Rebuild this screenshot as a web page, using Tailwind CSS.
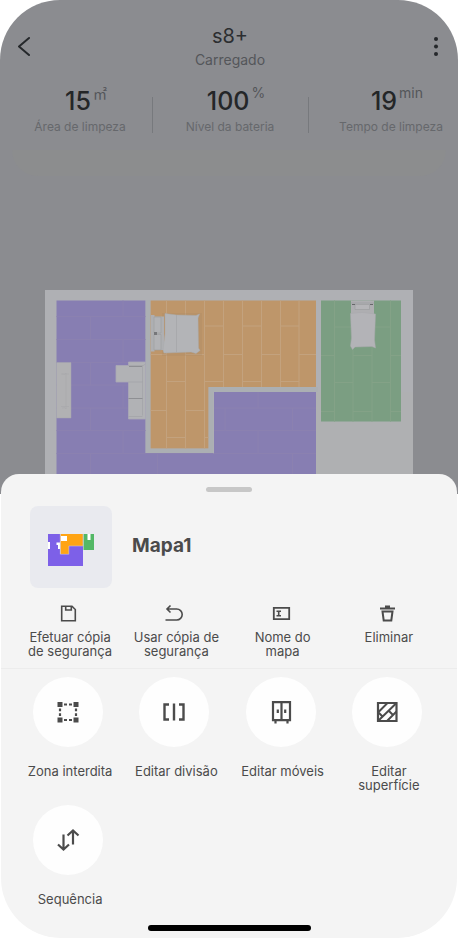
<!DOCTYPE html>
<html lang="pt">
<head>
  <meta charset="UTF-8">
  <meta name="viewport" content="width=device-width, initial-scale=1">
  <title>Mapa1</title>
  <script src="https://cdn.jsdelivr.net/npm/@tailwindcss/browser@4"></script>
</head>
<body class="bg-white font-['Inter',sans-serif]">

  <div class="min-h-screen flex flex-col rounded-[60px] overflow-hidden">

    <!-- Dimmed robot screen -->
    <div class="bg-[#8b8c90]">
      <header class="flex items-start justify-between pl-[18px] pr-4 pt-6">
        <button aria-label="Voltar" class="mt-3 w-5">
          <svg class="block" width="16" height="22" viewBox="0 0 16 22" fill="none" stroke="#25282b" stroke-width="2" stroke-linecap="round" stroke-linejoin="round"><path d="M11 2 1 10.500l10 8.500"/></svg>
        </button>
        <div class="text-center">
          <h1 class="text-xl leading-6 text-[#2c2e31]">s8+</h1>
          <p class="text-sm leading-6 text-[#54565a]">Carregado</p>
        </div>
        <button aria-label="Mais opções" class="mt-3 w-5">
          <svg class="block ml-auto" width="16" height="22" viewBox="0 0 16 22" fill="#25282b"><circle cx="10" cy="3" r="2"/><circle cx="10" cy="10.500" r="2"/><circle cx="10" cy="18" r="2"/></svg>
        </button>
      </header>

      <!-- Stats -->
      <section class="grid grid-cols-[152fr_156fr_150fr] mt-[13px] text-center whitespace-nowrap">
        <div class="pl-2">
          <p class="flex justify-center items-start gap-0.5 pl-3 text-[25px] leading-8 font-medium text-[#242628]">15<span class="font-['Noto_Sans_CJK_JP',sans-serif] text-sm leading-4 font-normal text-[#54565a]">㎡</span></p>
          <p class="text-xs leading-5 text-[#66686c]">Área de limpeza</p>
        </div>
        <div class="relative">
          <p class="flex justify-center items-start gap-0.5 pl-3 text-[25px] leading-8 font-medium text-[#242628]">100<span class="text-sm leading-4 font-normal text-[#54565a]">%</span></p>
          <p class="text-xs leading-5 text-[#66686c]">Nível da bateria</p>
          <i class="absolute left-0 top-3 h-9 w-px bg-[#77797d]"></i>
        </div>
        <div class="relative pl-4">
          <p class="flex justify-center items-start gap-0.5 pl-3 text-[25px] leading-8 font-medium text-[#242628]">19<span class="text-sm leading-4 font-normal text-[#54565a]">min</span></p>
          <p class="text-xs leading-5 text-[#66686c]">Tempo de limpeza</p>
          <i class="absolute left-0 top-3 h-9 w-px bg-[#77797d]"></i>
        </div>
      </section>
      <div class="mx-3 mt-[13px] h-[26px] rounded-b-[60px] bg-[#8c8d8e]"></div>

      <!-- Map -->
      <div class="mt-[114px] px-[45px]">
        <svg class="block w-full" viewBox="45 290 368 204">
          <rect x="45" y="290" width="368" height="204" fill="#afb0b4"/>
          <path d="M316 392h97v102h-97z" fill="#afb0b2"/>
          <path d="M56.500 300.500h89v153h68.500v-61.500h102v102H56.500z" fill="#877eb2"/>
          <path d="M150.500 300.500H316v86.500H208.500v61.500h-58z" fill="#be966a"/>
          <path d="M321 300.500h80v121h-80z" fill="#7b9e82"/>
          <path d="M148 300v151h63v-61.500h107" fill="none" stroke="#abafb3" stroke-width="4.500"/>

          <g fill="none" stroke="#8b81b0" stroke-width="1">
            <path d="M56.500 316.500h89M56.500 339.500h89M56.500 362.500h89M56.500 385h89M56.500 408h89M56.500 430.500h89M56.500 453.500h157M214 408h102M214 430.500h102M214 453.500h102"/>
            <path d="M123 300.500v16M90.500 316.500v23M123 339.500v23M90.500 362.500v23M123 385v23M90.500 408v23M123 430.500v23M90.500 453.500v22M157.500 453.500v22M258 392v16M292.500 408v22.500M258 430.500v23M292.500 453.500v22M225 408v22.500"/>
          </g>
          <g fill="none" stroke="#c3a27e" stroke-width="1">
            <path d="M166.500 300.500v148M185.500 300.500v148M204.500 300.500v148M223.500 300.500V387M242.500 300.500V387M261.500 300.500V387M280.500 300.500V387M299 300.500V387"/>
            <path d="M204.500 326h19M242.500 326h19M280.500 326H299M150.500 354.500h16M185.500 354.500h19M223.500 354.500h19M261.500 354.500h19M299 354.500h17M166.500 381.500h19M204.500 381.500h19M242.500 381.500h19M280.500 381.500H299M150.500 410.500h16M185.500 410.500h19M166.500 437.500h19M204.500 437.500h4"/>
          </g>
          <g fill="none" stroke="#84a287" stroke-width="1">
            <path d="M334.500 300.500v121M353 300.500v121M372 300.500v121M390.500 300.500v121"/>
            <path d="M334.500 327H353M372 327h18.500M321 355.500h13.500M353 355.500h19M390.500 355.500H401M334.500 382.500H353M372 382.500h18.500M321 411.500h13.500M353 411.500h19M390.500 411.500H401"/>
          </g>

          <!-- TV stand -->
          <path d="M56.500 362.500H71V418H56.500z" fill="#b1b1b3" stroke="#a5a4ae" stroke-width=".5"/>
          <path d="M62 374q4 1 4-1v36q0-2-4-1M61 374h8M61 406.500h8" fill="none" stroke="#a8a8ab" stroke-width=".6"/>

          <!-- Sofa -->
          <path d="M128.500 362h17v57h-17v-37h-12.500v-16.500h12.500z" fill="#b1b2b5" stroke="#a9a8b5" stroke-width=".8"/>
          <path d="M128.500 365.500h14v50M128.500 382h14M128.500 416.500h14M142.500 366l3-2" fill="none" stroke="#9fa0a4" stroke-width=".6"/>
          <path d="M129 366.500h13M128.500 398.500h14" fill="none" stroke="#85868a" stroke-width=".8"/>

          <!-- Double bed -->
          <path d="M162 313h40v43h-40z" fill="#a98763" opacity=".25"/>
          <path d="M151 315h3.500v1.500H164V350h-9.500v1.500H151z" fill="#aeafb2"/>
          <path d="M154 317h7v16h-7zM154 334.500h7V350h-7z" fill="#b2b3b6" stroke="#9c9da0" stroke-width=".6"/>
          <path d="M154 332h3v3h-3z" fill="#76777a"/>
          <path d="M165 313.500 176.500 315 196 315.500 199.500 314 198 318 198.500 348 200 350.500 196 353.500 191 352 164 353 163 350 165 334z" fill="#b3b4b7" stroke="#a9aaad" stroke-width=".5"/>
          <path d="M176.500 315v37.500" stroke="#a5a6a9" stroke-width=".8"/>

          <!-- Single bed -->
          <path d="M351 300.500h23V314h-23z" fill="#aeaeb1"/>
          <path d="M351 303h23M355 304.500h14.500v5H355z" fill="#b5b5b8" stroke="#9c9da0" stroke-width=".7"/>
          <path d="M352 304.500h3M370 304.500h3" stroke="#66676a" stroke-width="1"/>
          <path d="M350.500 313.500 362 312.500 375.500 314 374.500 340 375.500 348 372 346.500 355 347 352.500 349.500 350.500 346 351.500 338z" fill="#b3b3b7" stroke="#a8a9ac" stroke-width=".5"/>
        </svg>
      </div>
    </div>

    <!-- Bottom sheet -->
    <main class="relative -mt-5 mx-px grow flex flex-col bg-[#f4f4f4] rounded-t-[18px] rounded-b-[60px] text-[#4b4b4b]">
      <div class="mx-auto mt-[13px] h-[5px] w-[46px] rounded-full bg-[#c7c7c7]"></div>

      <div class="flex items-center gap-5 mt-[14px] pl-[29px]">
        <div class="size-[82px] pt-1.5 rounded-lg bg-[#e9eaef] flex items-center justify-center">
          <svg width="48" height="34" viewBox="0 0 48 34">
            <path d="M1 1h12v20h9v-8h14v20H1z" fill="#7d60e8"/>
            <path d="M13.500 1H36v12H22v8h-8.500z" fill="#ffa413"/>
            <path d="M36.500 1H47v16H36.500z" fill="#53b866"/>
            <path d="M14 3h6v5h-6zM40.500 1h3v6h-3zM1 9h2v7H1zM9.500 9.500H13V16h-2v-4H9.500z" fill="#fff"/>
            <path d="M13.300 1v20.300h8.500V13H36V1" fill="none" stroke="#c9c0d8" stroke-width=".6"/>
          </svg>
        </div>
        <h2 class="pb-0.5 text-[19px] leading-6 font-bold">Mapa1</h2>
      </div>

      <!-- Map actions -->
      <div class="grid grid-cols-4 mt-4 pl-[14px] pr-[17px] pb-[10px] border-b border-[#ececec] text-[13px] leading-[14px]">
        <button class="flex flex-col items-center gap-[7px]">
          <svg width="20" height="19" viewBox="0 0 20 19" fill="none" stroke="#4b4b4b" stroke-width="1.600"><path d="M3.700 2.200H14l3.300 3.300v11.300H3.700z"/><path d="M7.700 2.500V6h5.600V2.500"/></svg>
          <span class="pl-1">Efetuar cópia<br>de segurança</span>
        </button>
        <button class="flex flex-col items-center gap-[7px]">
          <svg width="20" height="19" viewBox="0 0 20 19" fill="none" stroke="#4b4b4b" stroke-width="1.600"><path d="M6.500 1.500 3 5l3.500 3.500M3 5h9.700a5.200 5.200 0 0 1 0 11H1.500"/></svg>
          <span class="pl-1">Usar cópia de<br>segurança</span>
        </button>
        <button class="flex flex-col items-center gap-[7px]">
          <svg width="20" height="19" viewBox="0 0 20 19" fill="none" stroke="#4b4b4b" stroke-width="1.800"><path d="M2.800 3.800h15.400v11.400H2.800z"/><path d="M5.500 7.300H10M5.500 11.700H10M7.700 7.500v4" stroke-width="1.600"/></svg>
          <span class="pl-1">Nome do<br>mapa</span>
        </button>
        <button class="flex flex-col items-center gap-[7px]">
          <svg width="20" height="19" viewBox="0 0 20 19" fill="none" stroke="#4b4b4b" stroke-width="2"><path d="M3 4.500h15M8 2.500h5"/><path d="M5.500 7.500h10l-1.200 9h-7.600z"/></svg>
          <span class="pl-1">Eliminar</span>
        </button>
      </div>

      <!-- Editing tools -->
      <div class="grid grid-cols-4 gap-y-[13px] mt-2 pl-[14px] pr-[17px] text-[13px] leading-[14px]">
        <button class="flex flex-col items-center gap-[17px]">
          <span class="size-[70px] rounded-full bg-[#fefefe] flex items-center justify-center">
            <svg width="24" height="24" viewBox="0 0 24 24" fill="#4b4b4b"><path d="M1.500 2h5v5h-5zM17.500 2h5v5h-5zM1.500 17.500h5v5h-5zM17.500 17.500h5v5h-5z"/><path d="M8 4.500h3M13 4.500h3M8 20h3M13 20h3M4 8.500v2.700M4 13.300V16M20 8.500v2.700M20 13.300V16" fill="none" stroke="#4b4b4b" stroke-width="2.200"/></svg>
          </span>
          <span class="pl-1">Zona interdita</span>
        </button>
        <button class="flex flex-col items-center gap-[17px]">
          <span class="size-[70px] rounded-full bg-[#fefefe] flex items-center justify-center">
            <svg width="24" height="24" viewBox="0 0 24 24" fill="none" stroke="#4b4b4b" stroke-width="2.400"><path d="M7 4.500H2.500V19.500H7M17 4.500h4.500v15H17M12 3.500v17"/></svg>
          </span>
          <span class="pl-1 whitespace-nowrap">Editar divisão</span>
        </button>
        <button class="flex flex-col items-center gap-[17px]">
          <span class="size-[70px] rounded-full bg-[#fefefe] flex items-center justify-center">
            <svg width="24" height="24" viewBox="0 0 24 24" fill="none" stroke="#4b4b4b" stroke-width="2.200"><path d="M4 2.200h17v18H4zM12.500 2v18M6.500 20v3.500M18.500 20v3.500M8.800 9.500v3.500M16.200 9.500v3.500"/></svg>
          </span>
          <span class="pl-1 whitespace-nowrap">Editar móveis</span>
        </button>
        <button class="flex flex-col items-center gap-[17px]">
          <span class="size-[70px] rounded-full bg-[#fefefe] flex items-center justify-center">
            <svg width="24" height="24" viewBox="0 0 24 24" fill="none" stroke="#4b4b4b" stroke-width="2.200"><path d="M3 3h18.500v18H3z"/><path d="M3 12.500 12.500 3M3 21 21.500 3M12 21l9.500-9.500M3.500 12.500l4 4M13.500 10.500l4 4" stroke-width="2"/></svg>
          </span>
          <span class="pl-1">Editar<br>superfície</span>
        </button>
        <button class="flex flex-col items-center gap-[17px]">
          <span class="size-[70px] rounded-full bg-[#fefefe] flex items-center justify-center">
            <svg width="24" height="24" viewBox="0 0 24 24" fill="none" stroke="#4b4b4b" stroke-width="2.200"><path d="M7.500 6.500v15M2 16.500l5.500 5 5.500-5M17 16.500v-14M11.500 7.500l5.500-5 5.500 5"/></svg>
          </span>
          <span class="pl-1">Sequência</span>
        </button>
      </div>

      <div class="mx-auto mt-auto mb-[7px] h-1.5 w-[163px] rounded-full bg-black"></div>
    </main>

  </div>

</body>
</html>
